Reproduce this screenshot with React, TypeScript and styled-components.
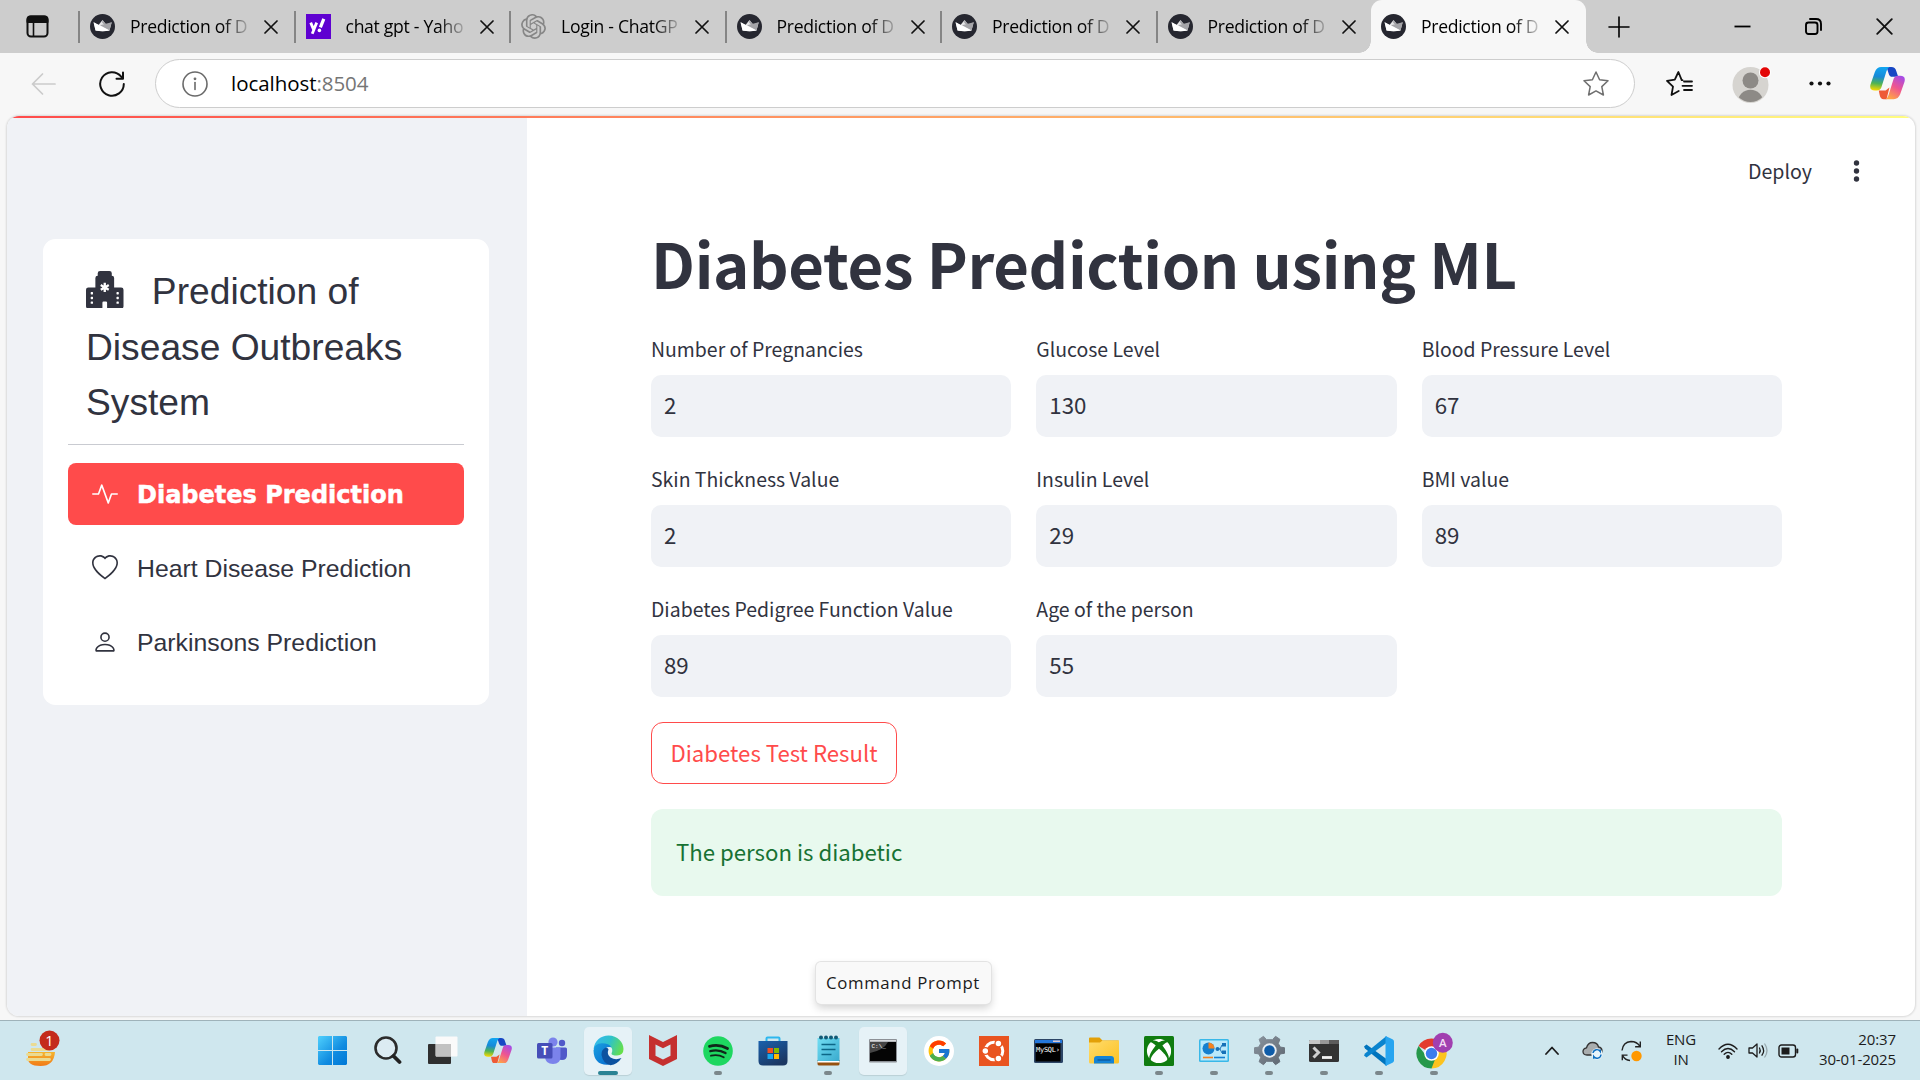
import React from "react";
import styled, { createGlobalStyle, css } from "styled-components";
import { BsActivity, BsHeart, BsPerson, BsHospitalFill } from "react-icons/bs";
import { FaXbox } from "react-icons/fa";
import { FcGoogle } from "react-icons/fc";
import { SiOpenai } from "react-icons/si";

const source = `"Noto Sans CJK SC", "Noto Sans CJK JP", sans-serif`;
const segoe = `"Open Sans", "Noto Sans", sans-serif`;
const arial = `"Liberation Sans", Arial, sans-serif`;

const GlobalStyle = createGlobalStyle`
  * { box-sizing: border-box; }
  body { margin: 0; overflow: hidden; background: #f7f7f7; }
  svg { display: block; flex: none; }
`;

const Screen = styled.div`
  width: 1920px;
  height: 1080px;
  display: grid;
  grid-template-rows: 53px 63px 904px 60px;
  background: #f7f7f7;
  position: relative;
  overflow: hidden;
`;

/* ---------- tab strip ---------- */
const TabStrip = styled.div`
  display: flex;
  background: #cdcdcd;
`;
const TabActions = styled.div`
  width: 78px;
  padding-left: 26px;
  display: flex;
  align-items: center;
`;
const Tab = styled.div<{ $active?: boolean }>`
  width: ${(p) => (p.$active ? 214.5 : 215.5)}px;
  height: 53px;
  display: flex;
  align-items: center;
  padding-left: ${(p) => (p.$active ? 10 : 12)}px;
  position: relative;
  ${(p) =>
    p.$active
      ? css`
          background: #f7f7f7;
          border-radius: 11px 11px 0 0;
          &::before, &::after {
            content: "";
            position: absolute;
            bottom: 0;
            width: 12px;
            height: 12px;
          }
          &::before { left: -12px; background: radial-gradient(circle at 0 0, transparent 11.5px, #f7f7f7 12px); }
          &::after { right: -12px; background: radial-gradient(circle at 100% 0, transparent 11.5px, #f7f7f7 12px); }
        `
      : css`
          background: linear-gradient(#858585, #858585) 0 11px / 2px 32px no-repeat;
        `}
`;
const Favicon = styled.div`
  width: 25px;
  height: 25px;
`;
const TabTitle = styled.div`
  width: 123px;
  margin: -2px 0 0 15px;
  white-space: nowrap;
  font: 400 17.6px/26px ${segoe};
  letter-spacing: -0.3px;
  color: #000;
  mask-image: linear-gradient(90deg, #000 92px, transparent 123px);
`;
const TabClose = styled.div`
  margin-left: 11px;
`;
const NewTab = styled.div`
  width: 66px;
  display: flex;
  align-items: center;
  justify-content: center;
`;
const WindowButtons = styled.div`
  margin-left: auto;
  display: flex;
  align-items: center;
`;
const WindowButton = styled.div`
  width: 71px;
  display: flex;
  justify-content: center;
`;

/* ---------- toolbar ---------- */
const Toolbar = styled.div`
  display: flex;
  align-items: center;
  padding: 0 15px 2px 31px;
`;
const NavButtons = styled.div`
  display: flex;
  align-items: center;
  gap: 43px;
  width: 124px;
`;
const AddressBar = styled.div`
  width: 1480px;
  height: 49px;
  border: 1.5px solid #cdcdcd;
  border-radius: 25px;
  background: #fff;
  display: flex;
  align-items: center;
  padding: 0 25px 0 26px;
`;
const Address = styled.div`
  flex: 1;
  margin: -1px 0 0 23px;
  font: 400 20.5px/28px ${segoe};
  letter-spacing: -0.05px;
  color: #000;
  span { color: #757575; }
`;
const BrowserTools = styled.div`
  flex: 1;
  display: flex;
  align-items: center;
  justify-content: space-between;
  padding-left: 31px;
`;

/* ---------- page ---------- */
const PageFrame = styled.div`
  padding: 0 5px 4px 7px;
`;
const Page = styled.div`
  height: 900px;
  display: grid;
  grid-template-columns: 520px 1fr;
  border-radius: 12px;
  overflow: hidden;
  background: #fff;
  position: relative;
  box-shadow: 0 0 2px 1px rgba(0, 0, 0, 0.12);
`;
const Decoration = styled.div`
  position: absolute;
  inset: 0 0 auto 0;
  height: 2px;
  background: linear-gradient(90deg, #ff4b4b, #fffd80);
`;
const Sidebar = styled.aside`
  background: #f0f2f6;
  padding: 123px 38px 0 36px;
`;
const MenuCard = styled.nav`
  height: 466px;
  border-radius: 12.5px;
  background: #fff;
  padding: 25px;
  color: #31333f;
`;
const MenuTitle = styled.div`
  padding: 0 18px;
  height: 181px;
  border-bottom: 1px solid #c9cbd1;
  font: 400 37.2px/55.5px ${arial};
  svg { display: inline-block; vertical-align: -4px; margin-right: 18px; }
`;
const MenuList = styled.div`
  display: grid;
  gap: 12px;
  margin-top: 18px;
`;
const MenuItem = styled.div<{ $active?: boolean }>`
  height: 62px;
  border-radius: 8px;
  display: flex;
  align-items: center;
  padding: 1px 0 0 24px;
  gap: 19px;
  white-space: nowrap;
  font: 400 24.8px/30px ${arial};
  svg { position: relative; top: -1px; }
  ${(p) =>
    p.$active &&
    css`
      background: #ff4b4b;
      color: #fff;
      font: 700 24px/30px "DejaVu Sans", ${arial};
      -webkit-text-stroke: 0.5px #fff;
    `}
`;
const Main = styled.main`
  position: relative;
  padding: 100px 133px 0 124px;
  font-family: ${source};
  color: #31333f;
`;
const AppHeader = styled.header`
  position: absolute;
  top: 39px;
  right: 55.5px;
  display: flex;
  align-items: center;
  gap: 40.5px;
  font-size: 19.6px;
  line-height: 32px;
`;
const Heading = styled.h1`
  margin: 0;
  height: 116px;
  font-size: 61.6px;
  letter-spacing: -0.35px;
  line-height: 94px;
  font-weight: 700;
  white-space: nowrap;
`;
const Fields = styled.div`
  display: grid;
  grid-template-columns: repeat(3, 1fr);
  gap: 25px;
`;
const Field = styled.label`
  display: grid;
  grid-template-rows: 43px 62px;
  font-size: 19.45px;
  line-height: 34px;
`;
const Value = styled.div`
  border-radius: 10px;
  background: #f0f2f6;
  padding-left: 13px;
  font-size: 22.3px;
  line-height: 58px;
`;
const ResultButton = styled.button`
  display: block;
  width: 246px;
  height: 62px;
  margin: 25px 0;
  padding: 0 0 2px;
  border: 1.5px solid #ff4b4b;
  border-radius: 12px;
  background: #fff;
  color: #ff4b4b;
  font: 400 22.2px/56px ${source};
`;
const Alert = styled.div`
  height: 87px;
  border-radius: 12px;
  background: #e8f9ee;
  color: #177233;
  padding-left: 25px;
  font-size: 22.2px;
  line-height: 84px;
`;

/* ---------- taskbar ---------- */
const Taskbar = styled.footer`
  display: flex;
  align-items: center;
  border-top: 1px solid #9fb3ba;
  background: #cfe7ee;
  color: #1c1c1c;
  font-family: ${segoe};
`;
const WidgetSlot = styled.div`
  width: 305px;
  padding: 0 0 5px 25px;
`;
const Apps = styled.div`
  display: flex;
`;
const AppSlot = styled.div<{ $lit?: boolean; $mark?: "open" | "focus" }>`
  width: 48px;
  height: 48px;
  margin: 0 3.55px;
  border-radius: 5px;
  display: flex;
  align-items: center;
  justify-content: center;
  position: relative;
  ${(p) => p.$lit && css`background: #e6f2f7; box-shadow: 0 1px 1px rgba(0, 0, 0, 0.1);`}
  ${(p) =>
    p.$mark &&
    css`
      &::after {
        content: "";
        position: absolute;
        bottom: 0;
        width: ${p.$mark === "focus" ? 20 : 8}px;
        height: 4px;
        border-radius: 2px;
        background: ${p.$mark === "focus" ? "#2a8394" : "#7b878b"};
      }
    `}
`;
const Tray = styled.div`
  margin-left: auto;
  display: flex;
  align-items: center;
  padding-right: 24px;
  font-size: 15px;
  line-height: 20px;
  letter-spacing: -0.12px;
`;
const TrayIcon = styled.div<{ $w: number }>`
  width: ${(p) => p.$w}px;
  display: flex;
  justify-content: center;
`;
const Language = styled.div`
  width: 62px;
  margin-top: -3px;
  text-align: center;
`;
const Clock = styled.div`
  width: 92px;
  margin-top: -3px;
  text-align: right;
  white-space: nowrap;
`;
const Tooltip = styled.div`
  position: absolute;
  left: 815.5px;
  top: 962px;
  width: 175px;
  height: 42px;
  border-radius: 5px;
  background: #f9f9f9;
  box-shadow: 0 0 0 1px #e3e3e3, 0 4px 8px rgba(0, 0, 0, 0.18);
  text-align: center;
  font: 400 16.8px/42px ${segoe};
  letter-spacing: 0.65px;
  color: #1b1b1b;
  white-space: nowrap;
`;

/* ---------- drawings ---------- */
const line = { fill: "none", stroke: "currentColor", strokeLinecap: "round", strokeLinejoin: "round" } as const;

const Crown = () => (
  <svg width="25" height="25" viewBox="0 0 25 25">
    <circle cx="12.5" cy="12.5" r="12.5" fill="#262730" />
    <path d="M3.6 8.2 8.5 11l4-5 4 5 5.2-2.8-2.2 8.3q-7 1.4-14 0z" fill="#e4e4e6" />
    <path d="m12.5 6 4 5-1 1.2-3.4-3.6zM21.7 8.2l-2.2 8.3-9.5-5.3z" fill="#a4a4a8" />
    <path d="m3.6 8.2 16 8.3q-7 1.4-14 0z" fill="#fff" />
  </svg>
);
const Yahoo = () => (
  <svg width="25" height="25" viewBox="0 0 25 25">
    <rect width="25" height="25" fill="#5f01d1" />
    <path d="m4.7 8.6 3 7.2 3-7.2M8.2 15l-2 4.7" fill="none" stroke="#fff" strokeWidth="2.8" />
    <path d="m17.800 4.800-3.400 8.600" fill="none" stroke="#fff" strokeWidth="3.200" />
    <circle cx="13.4" cy="16.4" r="1.8" fill="#fff" />
  </svg>
);
const Cross = ({ size = 14, w = 1.7 }: { size?: number; w?: number }) => (
  <svg width={size} height={size} viewBox="0 0 14 14" {...line} strokeWidth={w} color="#111">
    <path d="M1 1l12 12M13 1 1 13" />
  </svg>
);
const Copilot = ({ width, id }: { width: number; id: string }) => (
  <svg width={width} height={width * 0.92} viewBox="0 0 36 33">
    <defs>
      <linearGradient id={id + "a"} x1="0.4" y1="0" x2="0.3" y2="1">
        <stop offset="0" stopColor="#12a5f0" /><stop offset=".4" stopColor="#1789d8" /><stop offset=".7" stopColor="#4fb354" /><stop offset="1" stopColor="#f9d900" />
      </linearGradient>
      <linearGradient id={id + "b"} x1=".8" y1="0" x2=".3" y2="1">
        <stop offset="0" stopColor="#a44be8" /><stop offset=".5" stopColor="#ef5590" /><stop offset="1" stopColor="#ffa545" />
      </linearGradient>
    </defs>
    <path d="M11 0h11q4 0 5 4l2 6h-6q-3 0-4-4l-2-6z" fill="#1747c4" />
    <path d="M9 24h7l4-3-3 12h-3q-3 0-4-4z" fill="#ee5b36" />
    <path d="M11.500 0H20q-2 1-3 4l-5 16q-1 4-5 4H5q-6 0-4.500-6L5 5q2-5 6.500-5z" fill={`url(#${id}a)`} />
    <path d="M24.500 33H16q2-1 3-4l5-16q1-4 5-4h2q6 0 4.500 6L31 28q-2 5-6.500 5z" fill={`url(#${id}b)`} />
  </svg>
);

const TabActionsIcon = () => (
  <svg width="23" height="23" viewBox="0 0 23 23" {...line} strokeWidth="2" color="#111">
    <rect x="1.500" y="1.500" width="20" height="20" rx="3.500" />
    <path d="M1.500 7V4.500q0-3 3-3h14q3 0 3 3V7z" fill="currentColor" />
    <path d="M7.500 7v14" strokeWidth="1.600" />
  </svg>
);
const Back = () => (
  <svg width="25" height="22" viewBox="0 0 25 22" {...line} strokeWidth="1.700" color="#cbcbcb">
    <path d="M24 11H1.500M11.500 1l-10 10 10 10" />
  </svg>
);
const Reload = () => (
  <svg width="26" height="26" viewBox="0 0 26 26" {...line} strokeWidth="2" color="#111">
    <path d="M24.800 13A11.800 11.800 0 1 1 22 5.300l2 2.200M24 1.500v6.300h-6.500" />
  </svg>
);
const Info = () => (
  <svg width="26" height="26" viewBox="0 0 26 26" {...line} strokeWidth="1.600" color="#6a6a6a">
    <circle cx="13" cy="13" r="12" /><path d="M13 11.500v7" /><circle cx="13" cy="7.800" r=".6" fill="currentColor" />
  </svg>
);
const Star = () => (
  <svg width="26" height="25" viewBox="0 0 26 25" {...line} strokeWidth="1.500" color="#6f6f6f">
    <path d="m13 1 3.600 7.700 8.400 1.100-6.200 5.800 1.600 8.400-7.400-4.100L5.600 24l1.600-8.400L1 9.800l8.400-1.100z" />
  </svg>
);
const Favorites = () => (
  <svg width="27" height="25" viewBox="0 0 27 25" {...line} strokeWidth="1.800" color="#111">
    <path d="M16.500 9.200h-.8L12.400 1 8.800 8.700 1 9.800l6 5.800L5.500 24l7.200-4M18 10.500h8M16.500 14.800H26M18 19h8" />
  </svg>
);
const Avatar = () => (
  <svg width="39" height="38" viewBox="0 0 39 38">
    <defs><clipPath id="av"><circle cx="18.500" cy="20" r="17" /></clipPath></defs>
    <circle cx="18.500" cy="20" r="18" fill="#d6d4d0" />
    <g clipPath="url(#av)" fill="#8d8a86"><circle cx="18.500" cy="15.500" r="8" /><circle cx="18.500" cy="37.500" r="12.800" /></g>
    <circle cx="33" cy="7.300" r="6" fill="#fff" /><circle cx="33" cy="7.300" r="5" fill="#e30606" />
  </svg>
);
const Dots = () => (
  <svg width="22" height="5" viewBox="0 0 22 5" fill="#111"><circle cx="2.500" cy="2.500" r="2.100" /><circle cx="11" cy="2.500" r="2.100" /><circle cx="19.500" cy="2.500" r="2.100" /></svg>
);
const Kebab = () => (
  <svg width="7" height="22" viewBox="0 0 7 22" fill="#31333f"><circle cx="3.500" cy="3" r="2.700" /><circle cx="3.500" cy="11" r="2.700" /><circle cx="3.500" cy="19" r="2.700" /></svg>
);

const FoodWidget = () => (
  <svg width="36" height="37" viewBox="0 0 36 37">
    <defs><linearGradient id="fw" x1="0" y1="0" x2="0" y2="1"><stop offset="0" stopColor="#f5b52e" /><stop offset="1" stopColor="#f17a16" /></linearGradient></defs>
    <path d="M3 22h27q-1 14-14.500 14T3 27z" fill="url(#fw)" />
    <g stroke="#eadb92" strokeWidth="2.800" strokeLinecap="round"><path d="M7 14.500h3.500M7 19.500h16M2.500 24.500h14M21 24.500h4M2.500 29.500h22" /></g>
    <circle cx="24.500" cy="10.500" r="10" fill="#c42b1c" />
    <text x="24.500" y="15.800" fill="#fff" fontSize="14.500" textAnchor="middle" fontFamily="Open Sans, sans-serif">1</text>
  </svg>
);
const Windows = () => (
  <svg width="29" height="29" viewBox="0 0 29 29">
    <defs><linearGradient id="wn" gradientUnits="userSpaceOnUse" x1="0" y1="0" x2="29" y2="29"><stop offset="0" stopColor="#4fd0fd" /><stop offset=".6" stopColor="#108be0" /><stop offset="1" stopColor="#0078d6" /></linearGradient></defs>
    <path d="M1 0h13v14H0V1zM15 0h13l1 1v13H15zM0 15h14v14H1l-1-1zM15 15h14v13l-1 1H15z" fill="url(#wn)" />
  </svg>
);
const Search = () => (
  <svg width="29" height="29" viewBox="0 0 29 29">
    <circle cx="13" cy="12" r="10.500" fill="#dcebf2" stroke="#2b2b2b" strokeWidth="2.600" /><path d="m20.500 20 6 6" stroke="#222" strokeWidth="3.800" strokeLinecap="round" />
  </svg>
);
const TaskView = () => (
  <svg width="30" height="29" viewBox="0 0 30 29">
    <rect x="0" y="8" width="23" height="20" rx="1" fill="#2f2f2f" /><rect x="7.500" y=".5" width="22" height="20" rx="1" fill="#fafafa" /><path d="M8 8h15v12.500H8z" fill="#c1c1c1" />
  </svg>
);
const Teams = () => (
  <svg width="31" height="28" viewBox="0 0 31 28">
    <circle cx="16" cy="5" r="4.600" fill="#7b83eb" /><circle cx="25" cy="6" r="3.200" fill="#5059c9" />
    <path d="M19 10.500h9.500q1.500 0 1.500 1.500v6q0 5-5 5t-6-4z" fill="#5059c9" /><path d="M8 10.500h15.500v9q0 7.500-7.500 7.500t-8-7z" fill="#7b83eb" />
    <rect x="0" y="6" width="15.500" height="15.500" rx="1.500" fill="#464eb8" />
    <text x="7.750" y="18" fill="#fff" fontSize="12" fontWeight="700" textAnchor="middle" fontFamily="Open Sans, sans-serif">T</text>
  </svg>
);
const Edge = () => (
  <svg width="31" height="31" viewBox="0 0 31 31">
    <defs>
      <linearGradient id="eg" x1="0" y1=".3" x2="1" y2=".6"><stop offset="0" stopColor="#35b9ee" /><stop offset=".5" stopColor="#2fc2c9" /><stop offset="1" stopColor="#66e04a" /></linearGradient>
      <linearGradient id="eb" x1="0" y1="0" x2="1" y2="1"><stop offset="0" stopColor="#1aa0e0" /><stop offset="1" stopColor="#0669cf" /></linearGradient>
    </defs>
    <path d="M.6 14C1.500 5.500 8 .5 15.500.5 24.500.5 30.500 7 30.500 14q0 6-6.500 6.500-5.500 0-5.500-2 2-4-1-7T.6 14z" fill="url(#eg)" />
    <path d="M.5 15.500Q1 8.500 9 8.300q7 0 9.500 4-6-1.500-8 4-2 8 6 13.200Q1 31 .5 15.500z" fill="url(#eb)" />
    <path d="M13 12.500q-5 2-4.500 7.500 1.500 8.500 9 10.300 7-1 11-7.300-6 2.500-11-.5-4-3-2-8.200-1-1.800-2.500-1.800z" fill="#0c52a0" />
  </svg>
);
const McAfee = () => (
  <svg width="28" height="31" viewBox="0 0 28 31"><path d="M0 0 14 7 28 0v24l-14 7L0 24zM6.500 9.500v11.300L14 24.500l7.500-3.700V9.500L14 13.300z" fill="#c5302f" fillRule="evenodd" /></svg>
);
const Spotify = () => (
  <svg width="30" height="30" viewBox="0 0 30 30">
    <circle cx="15" cy="15" r="14.800" fill="#1ed760" />
    <g {...line} stroke="#10261a"><path d="M6.500 10.300q9.500-2.600 18 2.200" strokeWidth="2.800" /><path d="M7.300 15.200q8.200-2.200 15.200 1.900" strokeWidth="2.300" /><path d="M8 19.700q7-1.700 12.700 1.600" strokeWidth="1.900" /></g>
  </svg>
);
const Store = () => (
  <svg width="30" height="30" viewBox="0 0 30 30">
    <defs><linearGradient id="st" x1="0" y1="0" x2=".6" y2="1"><stop offset="0" stopColor="#1a61ad" /><stop offset="1" stopColor="#1b3762" /></linearGradient></defs>
    <path d="M8.500 6V2.500q0-1 1-1h11q1 0 1 1V6" fill="none" stroke="#2db7ee" strokeWidth="2" /><path d="M.5 5h29v20q0 4.500-4.500 4.500H5Q.5 29.500.5 25z" fill="url(#st)" />
    <path d="M9.500 12H15v5H9.500z" fill="#f25022" /><path d="M16 12h5v5h-5z" fill="#7fba00" /><path d="M9.500 18H15v5H9.500z" fill="#19a8ef" /><path d="M16 18h5v5h-5z" fill="#ffb901" />
  </svg>
);
const Notepad = () => (
  <svg width="23" height="31" viewBox="0 0 23 31">
    <defs><linearGradient id="np" x1="0" y1="0" x2="1" y2="1"><stop offset="0" stopColor="#72def3" /><stop offset="1" stopColor="#38a9cd" /></linearGradient></defs>
    <path d="M.5 25h22v4q0 1.500-2 1.500h-18q-2 0-2-1.500z" fill="#95510f" /><path d="M.5 3h22v24H.5z" fill="url(#np)" /><path d="M.5 26h22v1.500H.5z" fill="#fff" />
    <g fill="#115a76"><circle cx="4" cy="2.500" r="2" /><circle cx="9" cy="2.500" r="2" /><circle cx="14" cy="2.500" r="2" /><circle cx="19" cy="2.500" r="2" /></g>
    <path d="M4.500 9.500h14M4.500 14.500h14M4.500 19.500h10" stroke="#0c6686" strokeWidth="1.700" />
  </svg>
);
const Cmd = () => (
  <svg width="28" height="24" viewBox="0 0 28 24">
    <rect width="28" height="23.500" rx="1" fill="#8c9096" /><path d="M1 3h26v19H1z" fill="#050505" /><path d="M1 3h18Q15 11 1 14z" fill="#454545" /><path d="M1 1h26v1.500H1z" fill="#d8dadd" />
    <text x="2.500" y="9" fill="#fff" fontSize="6" fontFamily="Liberation Mono, monospace">C:\_</text>
  </svg>
);
const Google = () => (
  <svg width="30" height="30" viewBox="0 0 30 30"><circle cx="15" cy="15" r="15" fill="#fff" /><FcGoogle x="2.500" y="2.500" size={25} /></svg>
);
const Ubuntu = () => (
  <svg width="30" height="30" viewBox="0 0 30 30">
    <path d="M0 0h30v30H0z" fill="#e95420" /><circle cx="15" cy="15" r="8.800" fill="none" stroke="#fff" strokeWidth="3" />
    <g fill="#fff" stroke="#e95420" strokeWidth="1.300"><circle cx="6.300" cy="15" r="3.400" /><circle cx="19.400" cy="7.400" r="3.400" /><circle cx="19.400" cy="22.600" r="3.400" /></g>
  </svg>
);
const MySql = () => (
  <svg width="29" height="24" viewBox="0 0 29 24">
    <rect width="29" height="24" rx="1.500" fill="#2c4566" /><path d="M1 1h27v3H1z" fill="#2477dc" /><path d="M19 1.500h7v1.500h-7z" fill="#d9c8d0" /><path d="M1.500 4.500h25v18h-25z" fill="#000" />
    <text x="2" y="12.500" fill="#fff" fontSize="7" textLength="24" fontFamily="DejaVu Sans Mono, monospace">MySQL›</text>
  </svg>
);
const Folder = () => (
  <svg width="30" height="27" viewBox="0 0 30 27">
    <defs><linearGradient id="fd" x1="0" y1="0" x2="1" y2="1"><stop offset="0" stopColor="#ffdb6c" /><stop offset="1" stopColor="#fcc223" /></linearGradient></defs>
    <path d="M0 1.500Q0 .5 1 .5h9.500l3 3H29q1 0 1 1v8H0z" fill="#e3a008" /><path d="M0 5.500h11l2.500-2H30V25q0 1.500-1.500 1.500h-27Q0 26.500 0 25z" fill="url(#fd)" />
    <path d="M5 26.500V22q0-3 3-3h14q3 0 3 3v4.500z" fill="#1483d6" /><path d="M8.500 23h13" stroke="#0a5799" strokeWidth="1.300" />
  </svg>
);
const Xbox = () => (
  <svg width="30" height="30" viewBox="0 0 30 30"><rect width="30" height="30" rx="1.500" fill="#107c10" /><FaXbox x="2.500" y="2.500" size={25} color="#fff" /></svg>
);
const ControlPanel = () => (
  <svg width="30" height="23" viewBox="0 0 30 23">
    <rect width="30" height="23" rx="1.500" fill="#39b8e8" /><path d="M1.500 1.500h27v20h-27z" fill="#b9e9fb" />
    <circle cx="9.500" cy="9.500" r="6" fill="#1580cf" /><path d="M9.500 9.500v-6a6 6 0 0 1 6 6z" fill="#f58220" />
    <path d="M18 10h3l2-4h2M21 10l2 4h2" stroke="#1671b8" fill="none" /><g fill="#1671b8"><circle cx="18.500" cy="10" r="2" /><path d="M23 4h4v3.500h-4zM23 11.500h4V15h-4z" /></g>
    <path d="M4 18.500h10" stroke="#f58220" strokeWidth="1.600" /><path d="M15 18.500h11" stroke="#1580cf" strokeWidth="1.600" />
  </svg>
);
const Gear = () => (
  <svg width="31" height="31" viewBox="-15.500 -15.500 31 31">
    <defs><linearGradient id="gr" x1="0" y1="0" x2="1" y2="1"><stop offset="0" stopColor="#8a949e" /><stop offset="1" stopColor="#5d6670" /></linearGradient></defs>
    <path d="M-3-10.800-6-14.200-10.400-11.200-8.800-7-10.800-3.400-15-2.800v5.600l4.200.6 2 3.600-1.600 4.200L-6 14.200l3-3.400h6l3 3.400 4.400-3-1.600-4.200 2-3.600 4.200-.6v-5.600l-4.200-.6-2-3.600 1.600-4.200L6-14.200l-3 3.400z" fill="url(#gr)" stroke="url(#gr)" strokeLinejoin="round" />
    <circle r="7.200" fill="#e9eef2" /><circle r="5.300" fill="#0f5ca8" />
  </svg>
);
const Terminal = () => (
  <svg width="30" height="22" viewBox="0 0 30 22">
    <rect width="30" height="22" rx="1.500" fill="#333" /><path d="M1 0h10v4H0V1z" fill="#c6c6c6" /><path d="M11 0h9v4h-9z" fill="#989898" /><path d="M20 0h10v4H20z" fill="#5c5c5c" />
    <path d="m4.500 7.500 5 5-5 5" fill="none" stroke="#cfcfcf" strokeWidth="3" /><path d="M13 17.500h10" stroke="#f3f3f3" strokeWidth="2.800" />
  </svg>
);
const VsCode = () => (
  <svg width="30" height="30" viewBox="0 0 30 30">
    <path d="M0 10.500 2.500 8.500 22.500 23v7L1 12.500z" fill="#0074bd" /><path d="M0 19.500 2.500 21.500 22.500 7V0L1 17.500z" fill="#0a84ce" /><path d="m21.500 0 7 3.200q1.500.8 1.500 2.300v19q0 1.500-1.500 2.300l-7 3.200z" fill="#27a5f0" />
  </svg>
);
const Chrome = () => (
  <svg width="37" height="37" viewBox="0 0 37 37">
    <path d="M15.500 21.500 2.500 14A15 15 0 0 1 28.500 14z" fill="#e33b2e" /><path d="m15.500 21.500 13-7.500a15 15 0 0 1-13 22.500z" fill="#fcc31e" /><path d="M15.500 36.500A15 15 0 0 1 2.500 14l9.500 12 7 1.500z" fill="#26984a" />
    <circle cx="15.500" cy="21.500" r="7.300" fill="#fff" /><circle cx="15.500" cy="21.500" r="5.700" fill="#3b7ded" />
    <circle cx="26.800" cy="10.800" r="10" fill="#a13fb0" />
    <text x="26.800" y="15" fill="#f3dcf5" fontSize="11.500" textAnchor="middle" fontWeight="600" fontFamily="Open Sans, sans-serif">A</text>
  </svg>
);
const Chevron = () => <svg width="14" height="9" viewBox="0 0 14 9" {...line} strokeWidth="1.800"><path d="m1 8 6-6.500L13 8" /></svg>;
const OneDrive = () => (
  <svg width="21" height="19" viewBox="0 0 21 19">
    <path d="M5 14Q1 14 1 10.500 1 7.500 4.500 6.800 6 1.500 10.500 1.500q5 0 6 4.500 3.500.5 3.500 4 0 4-4 4z" fill="#a9adae" stroke="#333" strokeWidth="1.300" /><circle cx="15" cy="13" r="5.700" fill="#e9f5fb" />
    <path d="M11 12a4 4 0 0 1 7.300-1.500V8.500m.7 5a4 4 0 0 1-7.300 2v2.200" fill="none" stroke="#0f6fc0" strokeWidth="1.400" />
  </svg>
);
const Sync = () => (
  <svg width="21" height="22" viewBox="0 0 21 22">
    <path d="M1 10.500Q2 2 10 1.500q6 0 9 5M19.300 1.500v5.200h-5.200M9 20.500Q4 20 1.500 15.300M1.300 20.300v-5.200h5.200" fill="none" stroke="#222" strokeWidth="1.400" /><circle cx="15.500" cy="16" r="5.200" fill="#ff9800" />
  </svg>
);
const Wifi = () => (
  <svg width="20" height="16" viewBox="0 0 20 16" {...line} strokeWidth="1.400"><path d="M1 6q9-9.500 18 0M3.500 8.700q6.500-6.500 13 0M6.200 11.300q3.800-3.800 7.600 0" /><circle cx="10" cy="14" r="1.200" fill="currentColor" /></svg>
);
const Volume = () => (
  <svg width="21" height="17" viewBox="0 0 21 17" {...line} strokeWidth="1.300"><path d="M1 6h3.500L9 2v13l-4.500-4H1zM11.500 6q1.500 2.500 0 5M14 3.800q3.200 4.700 0 9.400" /><path d="M16.800 2q4.400 6.500 0 13" opacity=".3" /></svg>
);
const Battery = () => (
  <svg width="21" height="14" viewBox="0 0 21 14" {...line} strokeWidth="1.400"><rect x="1" y="1" width="16.500" height="12" rx="2.500" /><path d="M3.500 3.500h8v7h-8z" fill="currentColor" stroke="none" /><path d="M19.300 5.500v3" strokeWidth="2" /></svg>
);

/* ---------- data ---------- */
const tabs: [React.ReactNode, string][] = [
  [<Crown />, "Prediction of D"],
  [<Yahoo />, "chat gpt - Yaho"],
  [<SiOpenai size={25} color="#868686" />, "Login - ChatGP"],
  [<Crown />, "Prediction of D"],
  [<Crown />, "Prediction of D"],
  [<Crown />, "Prediction of D"],
  [<Crown />, "Prediction of D"],
];

const fields: [string, string][] = [
  ["Number of Pregnancies", "2"],
  ["Glucose Level", "130"],
  ["Blood Pressure Level", "67"],
  ["Skin Thickness Value", "2"],
  ["Insulin Level", "29"],
  ["BMI value", "89"],
  ["Diabetes Pedigree Function Value", "89"],
  ["Age of the person", "55"],
];

type App = { icon: React.ReactNode; lit?: boolean; mark?: "open" | "focus" };
const apps: App[] = [
  { icon: <Windows /> },
  { icon: <Search /> },
  { icon: <TaskView /> },
  { icon: <Copilot width={28} id="ct" /> },
  { icon: <Teams /> },
  { icon: <Edge />, lit: true, mark: "focus" },
  { icon: <McAfee /> },
  { icon: <Spotify />, mark: "open" },
  { icon: <Store /> },
  { icon: <Notepad />, mark: "open" },
  { icon: <Cmd />, lit: true },
  { icon: <Google /> },
  { icon: <Ubuntu /> },
  { icon: <MySql /> },
  { icon: <Folder /> },
  { icon: <Xbox />, mark: "open" },
  { icon: <ControlPanel />, mark: "open" },
  { icon: <Gear />, mark: "open" },
  { icon: <Terminal />, mark: "open" },
  { icon: <VsCode />, mark: "open" },
  { icon: <Chrome />, mark: "open" },
];

export default function App() {
  return (
    <Screen>
      <GlobalStyle />
      <TabStrip>
        <TabActions><TabActionsIcon /></TabActions>
        {tabs.map(([icon, title], i) => (
          <Tab key={i} $active={i === tabs.length - 1}>
            <Favicon>{icon}</Favicon>
            <TabTitle>{title}</TabTitle>
            <TabClose><Cross /></TabClose>
          </Tab>
        ))}
        <NewTab>
          <svg width="22" height="22" viewBox="0 0 22 22" {...line} strokeWidth="1.600"><path d="M11 1v20M1 11h20" /></svg>
        </NewTab>
        <WindowButtons>
          <WindowButton><svg width="17" height="3" viewBox="0 0 17 3"><path d="M.5 1.500h16" stroke="#000" strokeWidth="1.800" /></svg></WindowButton>
          <WindowButton>
            <svg width="17" height="17" viewBox="0 0 17 17" {...line} strokeWidth="1.900"><rect x="1" y="4.500" width="11.500" height="11.500" rx="2.500" /><path d="M5 1h6q5 0 5 5v6" /></svg>
          </WindowButton>
          <WindowButton><Cross size={17} w={1.5} /></WindowButton>
        </WindowButtons>
      </TabStrip>

      <Toolbar>
        <NavButtons><Back /><Reload /></NavButtons>
        <AddressBar>
          <Info />
          <Address>localhost<span>:8504</span></Address>
          <Star />
        </AddressBar>
        <BrowserTools><Favorites /><Avatar /><Dots /><Copilot width={35} id="cb" /></BrowserTools>
      </Toolbar>

      <PageFrame>
        <Page>
          <Sidebar>
            <MenuCard>
              <MenuTitle><BsHospitalFill size={37.5} /> Prediction of Disease Outbreaks System</MenuTitle>
              <MenuList>
                <MenuItem $active><BsActivity size={26} />Diabetes Prediction</MenuItem>
                <MenuItem><BsHeart size={26} />Heart Disease Prediction</MenuItem>
                <MenuItem><BsPerson size={26} />Parkinsons Prediction</MenuItem>
              </MenuList>
            </MenuCard>
          </Sidebar>
          <Main>
            <AppHeader>Deploy<Kebab /></AppHeader>
            <Heading>Diabetes Prediction using ML</Heading>
            <Fields>
              {fields.map(([label, value]) => (
                <Field key={label}>{label}<Value>{value}</Value></Field>
              ))}
            </Fields>
            <ResultButton>Diabetes Test Result</ResultButton>
            <Alert>The person is diabetic</Alert>
          </Main>
          <Decoration />
        </Page>
      </PageFrame>

      <Taskbar>
        <WidgetSlot><FoodWidget /></WidgetSlot>
        <Apps>
          {apps.map((a, i) => (
            <AppSlot key={i} $lit={a.lit} $mark={a.mark}>{a.icon}</AppSlot>
          ))}
        </Apps>
        <Tray>
          <TrayIcon $w={40}><Chevron /></TrayIcon>
          <TrayIcon $w={40}><OneDrive /></TrayIcon>
          <TrayIcon $w={38}><Sync /></TrayIcon>
          <Language>ENG<br />IN</Language>
          <TrayIcon $w={31}><Wifi /></TrayIcon>
          <TrayIcon $w={30}><Volume /></TrayIcon>
          <TrayIcon $w={31}><Battery /></TrayIcon>
          <Clock>20:37<br />30-01-2025</Clock>
        </Tray>
      </Taskbar>
      <Tooltip>Command Prompt</Tooltip>
    </Screen>
  );
}
